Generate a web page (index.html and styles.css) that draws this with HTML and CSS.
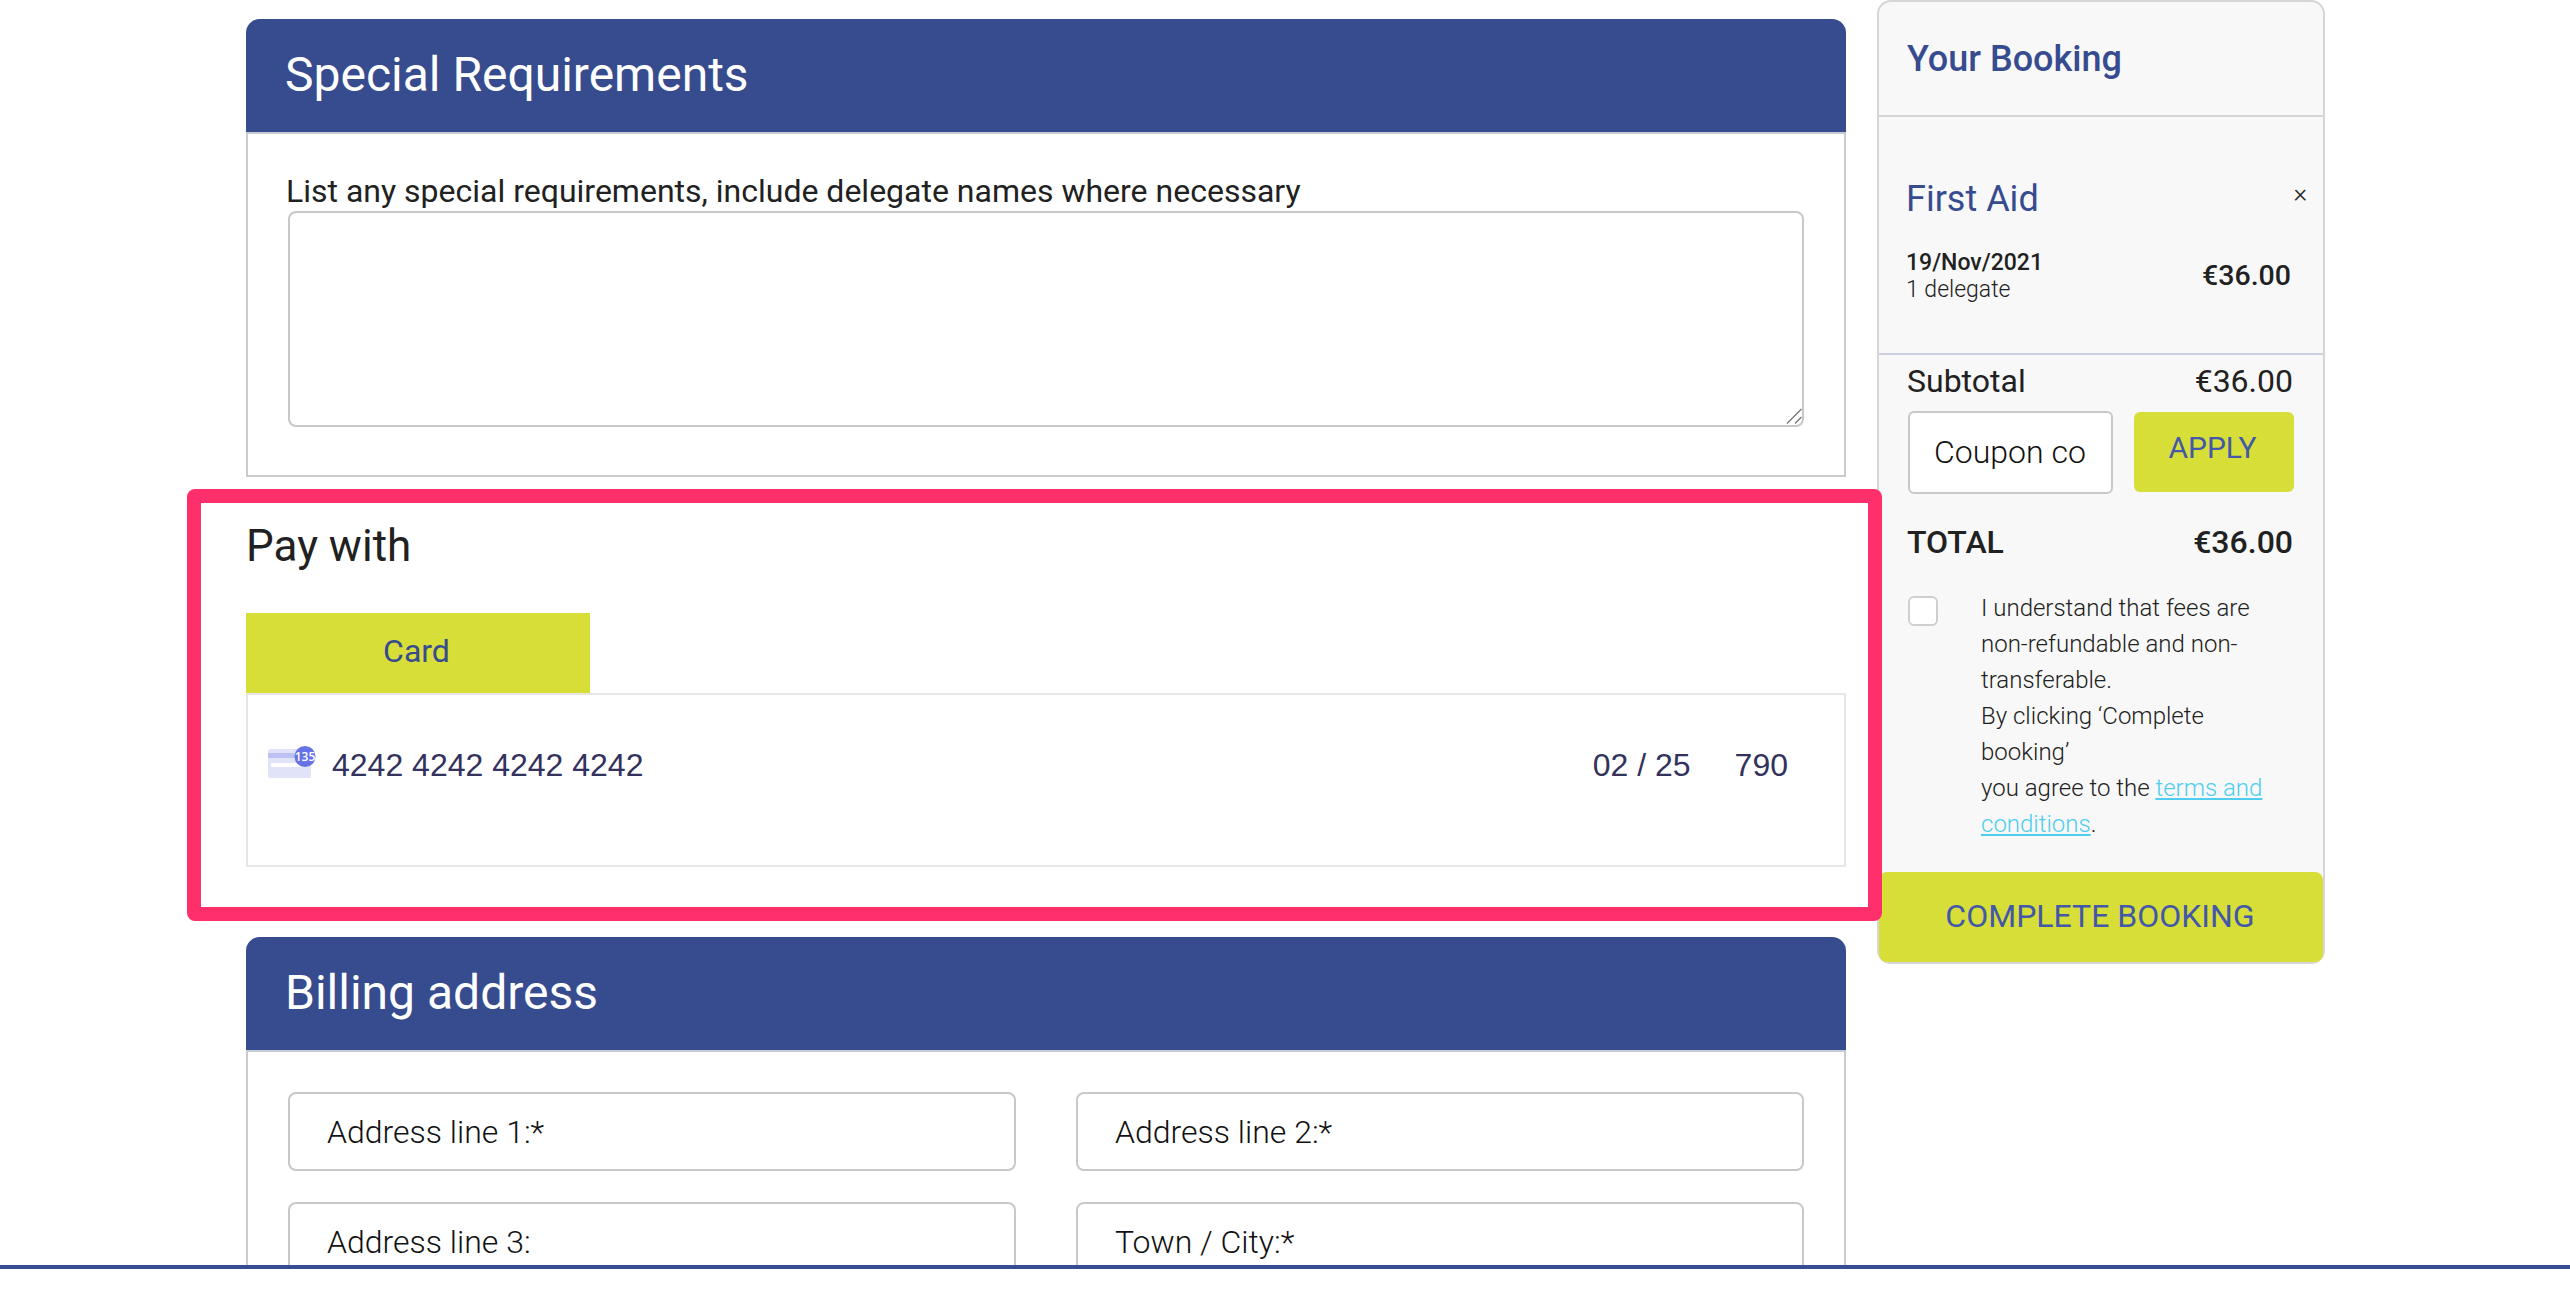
FILE: index.html
```html
<!DOCTYPE html>
<html lang="en">
<head>
<meta charset="utf-8">
<title>Booking</title>
<link rel="stylesheet" href="styles.css">
</head>
<body>
<div class="viewport">
  <div class="layout">
    <main class="main">
      <section class="panel panel-special">
        <h2 class="panel-title">Special Requirements</h2>
        <div class="panel-body special-body">
          <label class="field-label" for="req">List any special requirements, include delegate names where necessary</label>
          <div class="req-wrap">
            <textarea class="req-area" id="req"></textarea>
            <svg class="grip" width="16" height="16" viewBox="0 0 16 16" aria-hidden="true">
              <path d="M1 15.500 15.500 1M9 15.500 15.500 9" stroke="#6f6f6f" stroke-width="1.200" fill="none"/>
            </svg>
          </div>
        </div>
      </section>
      <section class="pay">
        <h3 class="pay-title">Pay with</h3>
        <div class="tab">Card</div>
        <div class="card-box">
          <svg class="card-icon" width="48" height="32" viewBox="0 0 48 32" aria-hidden="true">
            <rect x="0" y="3" width="43" height="29" rx="2.5" fill="#e1e3f9"/>
            <rect x="0" y="7" width="43" height="5" fill="#bcc1f1"/>
            <rect x="3" y="17" width="30" height="4" rx="1" fill="#fff"/>
            <circle cx="37" cy="10.500" r="10.500" fill="#6772e5"/>
            <text x="37" y="15" class="badge-text" text-anchor="middle">135</text>
          </svg>
          <span class="card-num">4242 4242 4242 4242</span>
          <span class="card-exp">02 / 25</span>
          <span class="card-cvc">790</span>
        </div>
      </section>
      <section class="panel">
        <h2 class="panel-title">Billing address</h2>
        <div class="panel-body address-grid">
          <input class="text-input" placeholder="Address line 1:*">
          <input class="text-input" placeholder="Address line 2:*">
          <input class="text-input" placeholder="Address line 3:">
          <input class="text-input" placeholder="Town / City:*">
        </div>
      </section>
    </main>
    <aside class="booking">
      <h2 class="booking-title">Your Booking</h2>
      <div class="item">
        <div class="item-head">
          <span class="item-name">First Aid</span>
          <span class="item-remove">×</span>
        </div>
        <div class="item-row">
          <div>
            <div class="item-date">19/Nov/2021</div>
            <div class="item-qty">1 delegate</div>
          </div>
          <div class="item-price">€36.00</div>
        </div>
      </div>
      <div class="summary">
        <div class="sum-row"><span>Subtotal</span><span>€36.00</span></div>
        <div class="coupon">
          <input class="coupon-input" placeholder="Coupon code">
          <button class="apply" type="button">APPLY</button>
        </div>
        <div class="sum-row total"><span>TOTAL</span><span>€36.00</span></div>
        <div class="terms">
          <span class="check"></span>
          <p class="terms-text">I understand that fees are non-refundable and non-transferable.<br>By clicking ‘Complete booking’<br>you agree to the <a href="#" class="terms-link">terms and conditions</a>.</p>
        </div>
      </div>
      <button class="complete" type="button">COMPLETE BOOKING</button>
    </aside>
  </div>
  <div class="highlight"></div>
</div>
<div class="bottom-line"></div>
</body>
</html>
```

FILE: styles.css
```css
* { box-sizing: border-box; }
html, body { margin: 0; padding: 0; background: #fff; }
body { font-family: Roboto, "Liberation Sans", sans-serif; color: #212121; height: 1310px; overflow: hidden; }

.viewport { position: relative; height: 1265px; overflow: hidden; }
.layout { display: flex; align-items: flex-start; padding-left: 246px; gap: 31px; }
.main { width: 1600px; padding-top: 19px; flex: none; }

.panel-title {
  margin: 0; height: 115px; padding: 0 39px; background: #374b8f; color: #fff;
  font-weight: 400; font-size: 48px; line-height: 111px;
  border-radius: 14px 14px 0 0; border-bottom: 2px solid #c8cad4;
}
.panel-body { border: 2px solid #cbcbcb; border-top: 0; }
.special-body { height: 343px; padding: 38px 40px 0 40px; }
.field-label { display: block; margin-left: -2px; font-size: 32px; line-height: 38px; font-weight: 400; color: #212121; height: 39px; }
.req-wrap { position: relative; width: 1516px; height: 216px; }
.req-area {
  display: block; width: 100%; height: 100%; resize: none;
  border: 2px solid #c8c8c8; border-radius: 8px; background: #fff; outline: none;
}
.grip { position: absolute; right: 2px; bottom: 3px; }

.pay { height: 460px; padding-top: 43px; }
.pay-title { margin: 0; font-size: 44px; font-weight: 400; line-height: 53px; color: #212121; }
.tab {
  width: 344px; height: 80px; margin-top: 40px; padding-right: 3px; background: #d8de38; color: #374b8f;
  font-size: 32px; line-height: 77px; text-align: center;
}
.card-box {
  display: flex; align-items: center; height: 174px; border: 2px solid #e6e6e6;
  padding: 0 56px 30px 20px; font-family: "Liberation Sans", Arial, sans-serif;
  font-size: 32px; color: #32325d;
}
.card-icon { flex: none; margin-right: 16px; margin-top: -7px; }
.badge-text { font-family: "Open Sans", sans-serif; font-size: 12px; font-weight: 600; fill: #fff; }
.card-num { flex: 1; }
.card-exp { margin-right: 44px; }

.address-grid {
  display: grid; grid-template-columns: 728px 728px; grid-auto-rows: 79px; align-content: start;
  column-gap: 60px; row-gap: 31px; padding: 40px 40px 0 40px; height: 300px;
}
.text-input {
  height: 79px; padding: 0 37px; width: 100%; border: 2px solid #c8c8c8; border-radius: 8px;
  background: #fff; font-family: Roboto, sans-serif; font-size: 32px; font-weight: 300; outline: none;
}
.text-input::placeholder { color: #111; opacity: 1; }

.booking {
  flex: none; width: 448px; height: 964px; background: #f8f8f8; display: flex; flex-direction: column;
  border: 2px solid #d6d6d6; border-radius: 14px;
}
.booking-title {
  margin: 0; height: 115px; flex: none; padding: 0 28px; border-bottom: 2px solid #d6d6d6;
  color: #374b8f; font-size: 36px; font-weight: 500; line-height: 115px;
}
.item { height: 238px; flex: none; padding: 57px 32px 0 27px; border-bottom: 2px solid #cdd0de; }
.item-head { display: flex; justify-content: space-between; align-items: center; height: 50px; }
.item-name { color: #374b8f; font-size: 36px; font-weight: 400; }
.item-remove { font-size: 26px; color: #212121; margin-right: -16px; margin-top: -12px; font-weight: 300; }
.item-row { display: flex; justify-content: space-between; align-items: center; margin-top: 26px; }
.item-date { font-size: 23px; font-weight: 500; line-height: 26px; }
.item-qty { font-size: 23px; font-weight: 300; line-height: 27px; }
.item-price { font-size: 28.500px; font-weight: 500; margin-top: -2px; }

.summary { flex: 1; padding: 0 30px 0 28px; }
.sum-row { display: flex; justify-content: space-between; font-size: 32px; height: 56px; line-height: 52px; }
.coupon { display: flex; gap: 21px; align-items: flex-start; height: 84px; margin-left: 1px; }
.coupon-input {
  flex: none; width: 205px; height: 83px; padding: 0 24px 2px; border: 2px solid #c8c8c8; border-radius: 6px;
  background: #fff; font-family: Roboto, sans-serif; font-size: 32px; font-weight: 300; outline: none;
}
.coupon-input::placeholder { color: #111; opacity: 1; }
.apply {
  flex: none; width: 160px; height: 80px; margin-top: 1px; padding: 0 3px 10px 0; border: 0; border-radius: 6px;
  background: #d8de38; color: #4358a8; font-family: Roboto, sans-serif; font-size: 30px; font-weight: 400;
}
.total { font-weight: 500; margin-top: 20px; height: 56px; line-height: 54px; font-size: 32px; }
.terms { display: flex; margin-top: 19px; }
.check { flex: none; width: 30px; height: 30px; margin-top: 6px; margin-left: 1px; background: #fff; border: 2px solid #cfcfcf; border-radius: 6px; }
.terms-text { margin: 0 0 0 43px; font-size: 24px; line-height: 36px; font-weight: 300; color: #212121; }
.terms-link { color: #4fcdee; }

.complete {
  flex: none; height: 90px; padding: 0 2px 2px 0; border: 0; border-radius: 8px; background: #d8de38; color: #4358a8;
  font-family: Roboto, sans-serif; font-size: 32px; font-weight: 400;
}

.highlight {
  position: absolute; left: 187px; top: 489px; width: 1695px; height: 432px;
  border: 14px solid #ff2f6c; border-radius: 8px; pointer-events: none;
}
.bottom-line { height: 4px; background: #344e93; }
```
